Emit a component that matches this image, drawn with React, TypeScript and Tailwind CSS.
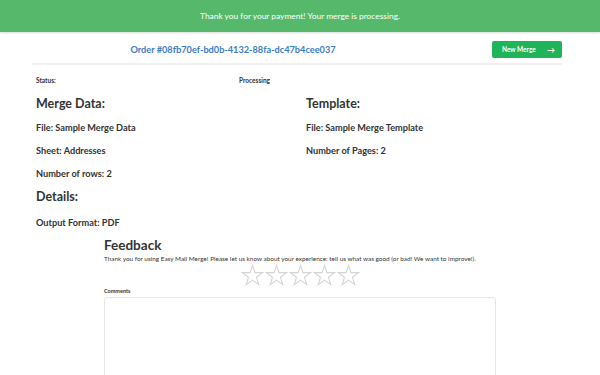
import React from "react";

function Star() {
  return (
    <svg viewBox="0 0 24 24" className="h-[23px] w-[23px]" fill="none" stroke="#d4d4d4" strokeWidth="1.1">
      <polygon points="12,1.5 14.6,9 22.6,9 16.1,13.8 18.6,21.5 12,16.8 5.4,21.5 7.9,13.8 1.4,9 9.4,9" />
    </svg>
  );
}

export default function App() {
  return (
    <div className="w-[600px] h-[375px] overflow-hidden bg-white text-[#333]" style={{ fontFamily: "Lato, 'Open Sans', sans-serif" }}>
      {/* Payment banner */}
      <div className="h-[32px] bg-[#56b86b] flex items-center justify-center shadow-[0_1px_2px_rgba(0,0,0,0.15)]">
        <span className="text-white text-[8.4px]">Thank you for your payment! Your merge is processing.</span>
      </div>

      <div className="ml-[32px] w-[530px]">
        {/* Order header */}
        <div className="h-[33px] pt-[4px] flex items-center border-b-2 border-[#f0f0f0]">
          <div className="w-[400px] flex justify-center pl-[2px]">
            <span className="text-[#3b7cc4] font-bold text-[9.2px]">Order #08fb70ef-bd0b-4132-88fa-dc47b4cee037</span>
          </div>
          <div className="flex-1 flex justify-end">
            <button className="w-[70px] h-[17px] rounded-[2px] bg-[#1fb35a] text-white text-[6.5px] font-bold flex items-center justify-between pl-[10px] pr-[7px]">
              <span>New Merge</span>
              <span className="text-[8px]">→</span>
            </button>
          </div>
        </div>

        <div className="pl-[4px] font-bold">
          {/* Status */}
          <div className="h-[31px] flex items-center text-[6.5px]">
            <span className="w-[203px]">Status:</span>
            <span>Processing</span>
          </div>

          <div className="flex">
            <div className="w-[270px]">
              <div className="h-[16px] flex items-center text-[12.5px]">Merge Data:</div>
              <div className="mt-[5px] h-[22px] flex items-center text-[9.2px]">File: Sample Merge Data</div>
              <div className="h-[24px] flex items-center text-[9.2px]">Sheet: Addresses</div>
              <div className="h-[22px] flex items-center text-[9.2px]">Number of rows: 2</div>
              <div className="h-[25px] flex items-center text-[12.5px]">Details:</div>
              <div className="h-[25px] flex items-center text-[9.2px]">Output Format: PDF</div>
            </div>
            <div className="flex-1">
              <div className="h-[16px] flex items-center text-[12.5px]">Template:</div>
              <div className="mt-[5px] h-[22px] flex items-center text-[9.2px]">File: Sample Merge Template</div>
              <div className="h-[24px] flex items-center text-[9.2px]">Number of Pages: 2</div>
            </div>
          </div>
        </div>
      </div>

      {/* Feedback */}
      <div className="mx-auto w-[392px] mt-[2px]">
        <div className="text-[13.5px] font-bold leading-[16px]">Feedback</div>
        <div className="mt-[1px] text-[6.4px] leading-[9px]">
          Thank you for using Easy Mail Merge! Please let us know about your experience: tell us what was good (or bad! We want to improve!).
        </div>
        <div className="flex justify-center gap-[1px] mt-[1px]">
          <Star />
          <Star />
          <Star />
          <Star />
          <Star />
        </div>
        <div className="text-[5.5px] font-bold">Comments</div>
        <textarea className="mt-[2px] block w-[392px] h-[90px] border border-[#e6e6e6] rounded-[3px] resize-y" />
      </div>
    </div>
  );
}
